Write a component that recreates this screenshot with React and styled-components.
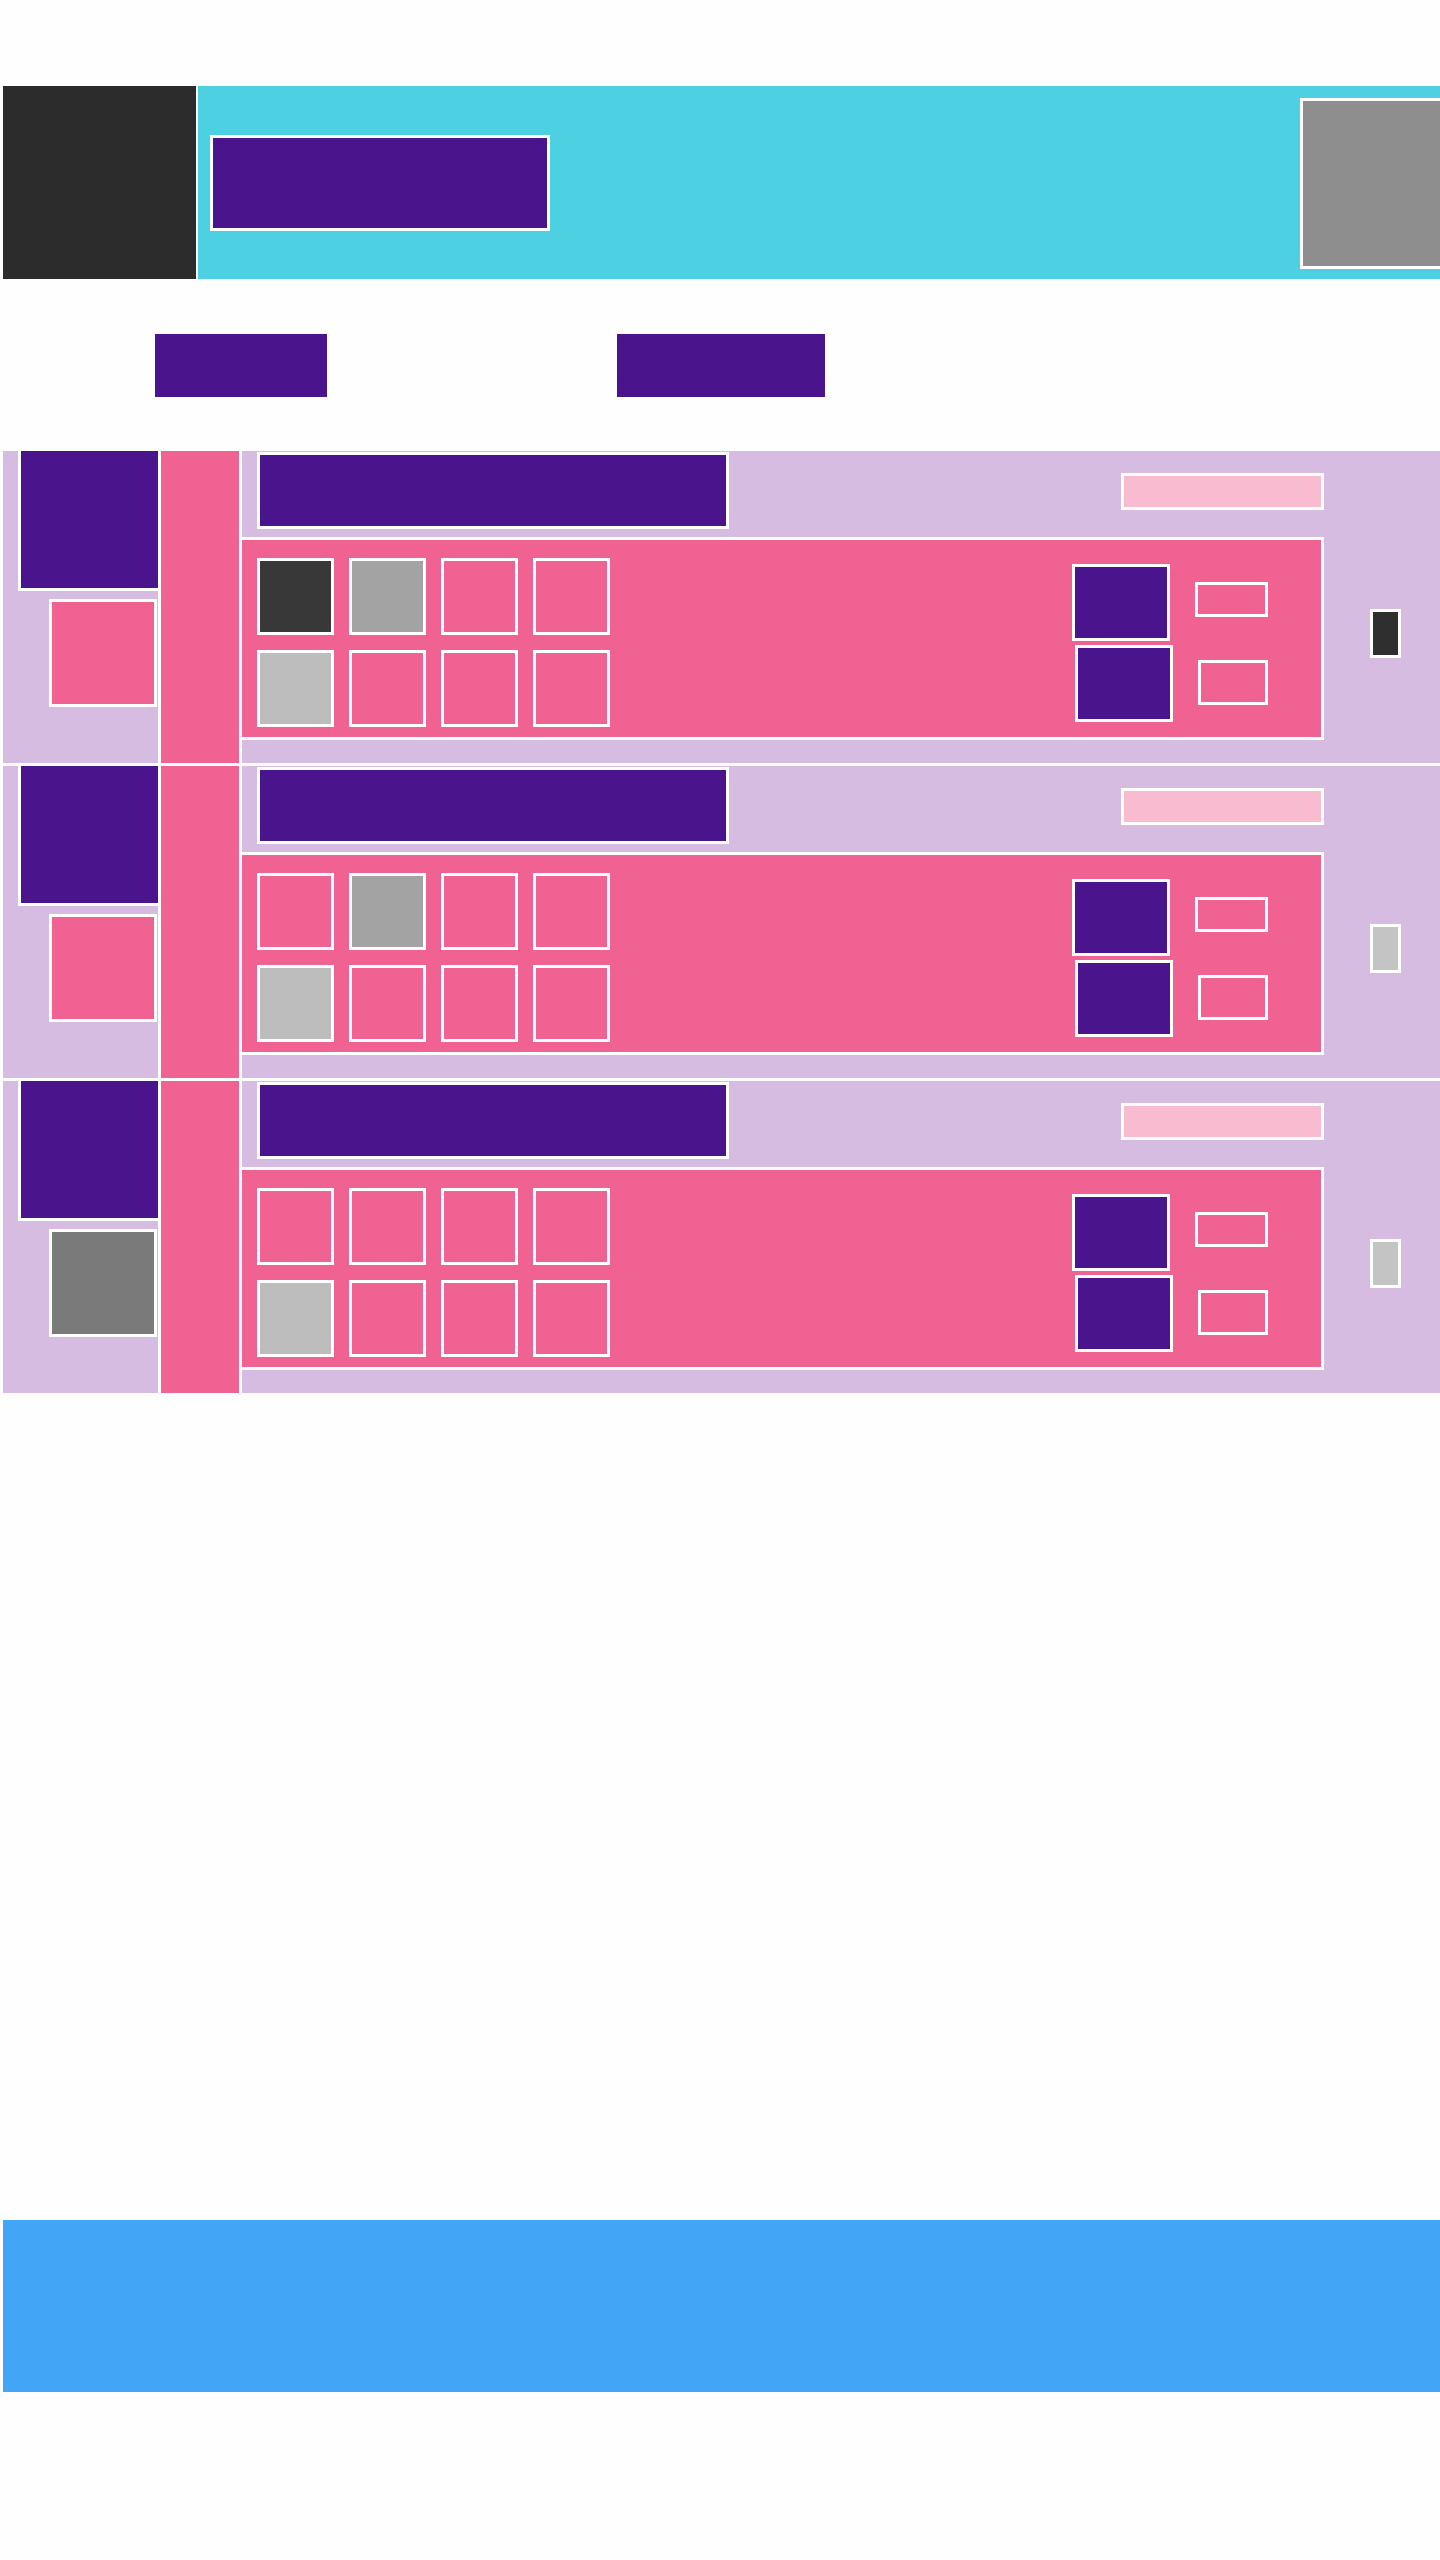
import React from 'react';
import styled, { createGlobalStyle } from 'styled-components';

const GlobalStyle = createGlobalStyle`
  html, body {
    margin: 0;
    padding: 0;
    background: #fefefe;
    font-family: "Liberation Sans", Arial, sans-serif;
  }
  * {
    box-sizing: border-box;
  }
`;

const Page = styled.div`
  width: 1440px;
  min-height: 2560px;
  padding: 86px 0 0 3px;
  overflow: hidden;
`;

const Header = styled.header`
  display: flex;
  gap: 2px;
  height: 193px;
`;

const Brand = styled.div`
  width: 193px;
  flex-shrink: 0;
  background: #2c2c2c;
`;

const HeaderBar = styled.div`
  flex: 1;
  display: flex;
  justify-content: space-between;
  align-items: center;
  padding-left: 12px;
  background: #4dd0e1;
  overflow: hidden;
`;

const Title = styled.div`
  width: 340px;
  height: 96px;
  background: #4a148c;
  border: 3px solid #fff;
`;

const Avatar = styled.div`
  align-self: flex-start;
  width: 150px;
  height: 171px;
  margin-top: 12px;
  margin-right: -10px;
  background: #8e8e8e;
  border: 3px solid #fff;
`;

const Nav = styled.nav`
  display: flex;
  height: 63px;
  margin: 55px 0 54px;
  padding-left: 152px;
  gap: 290px;
`;

const NavItem = styled.div`
  width: ${p => p.w}px;
  background: #4a148c;
`;

const List = styled.div`
  display: flex;
  flex-direction: column;
  gap: 3px;
`;

const Row = styled.div`
  display: flex;
  gap: 3px;
  height: 312px;
`;

const Side = styled.div`
  width: 155px;
  flex-shrink: 0;
  display: flex;
  flex-direction: column;
  align-items: flex-end;
  background: #d7bce1;
`;

const Cover = styled.div`
  width: 140px;
  height: 140px;
  background: #4a148c;
  border-left: 3px solid #fff;
  border-bottom: 3px solid #fff;
`;

const Thumb = styled.div`
  width: 108px;
  height: 108px;
  margin: 8px 1px 0 0;
  background: ${p => p.color};
  border: 3px solid #fff;
`;

const Rail = styled.div`
  width: 78px;
  flex-shrink: 0;
  background: #f06292;
`;

const Content = styled.div`
  flex: 1;
  display: grid;
  grid-template-columns: 1082px 1fr;
  background: #d7bce1;
`;

const Main = styled.div`
  display: flex;
  flex-direction: column;
`;

const TopBar = styled.div`
  display: flex;
  justify-content: space-between;
  align-items: flex-start;
  height: 86px;
  padding: 1px 0 0 15px;
`;

const Heading = styled.div`
  width: 472px;
  height: 77px;
  background: #4a148c;
  border: 3px solid #fff;
`;

const Tag = styled.div`
  width: 203px;
  height: 37px;
  margin-top: 21px;
  background: #f8bbd0;
  border: 3px solid #fff;
`;

const Panel = styled.div`
  display: flex;
  justify-content: space-between;
  align-items: flex-start;
  height: 203px;
  padding: 18px 53px 0 15px;
  background: #f06292;
  border: 3px solid #fff;
  border-left: none;
`;

const Grid = styled.div`
  display: grid;
  grid-template-columns: repeat(4, 77px);
  grid-auto-rows: 77px;
  gap: 15px;
`;

const Cell = styled.div`
  background: ${p => p.color};
  border: 3px solid #fff;
`;

const Actions = styled.div`
  display: flex;
  flex-direction: column;
  gap: 4px;
  margin-top: 6px;
`;

const ActionRow = styled.div`
  display: flex;
  justify-content: flex-end;
  align-items: center;
  gap: 25px;
`;

const Button = styled.div`
  width: 98px;
  height: 77px;
  background: #4a148c;
  border: 3px solid #fff;
`;

const Chip = styled.div`
  width: ${p => p.w}px;
  height: ${p => p.h}px;
  margin-top: ${p => p.offset || 0}px;
  background: #f06292;
  border: 3px solid #fff;
`;

const Aside = styled.div`
  padding: 158px 0 0 46px;
`;

const Toggle = styled.div`
  width: 31px;
  height: 49px;
  background: ${p => p.color};
  border: 3px solid #fff;
`;

const Footer = styled.footer`
  height: 172px;
  margin-top: 827px;
  background: #42a5f5;
`;

const PINK = '#f06292';

const rows = [
  {
    thumb: PINK,
    cells: ['#383838', '#a3a3a3', PINK, PINK, '#bdbdbd', PINK, PINK, PINK],
    toggle: '#2f2f2f',
  },
  {
    thumb: PINK,
    cells: [PINK, '#a3a3a3', PINK, PINK, '#bdbdbd', PINK, PINK, PINK],
    toggle: '#c4c4c4',
  },
  {
    thumb: '#7a7a7a',
    cells: [PINK, PINK, PINK, PINK, '#bdbdbd', PINK, PINK, PINK],
    toggle: '#c4c4c4',
  },
];

const ListRow = ({ row }) => (
  <Row>
    <Side>
      <Cover />
      <Thumb color={row.thumb} />
    </Side>
    <Rail />
    <Content>
      <Main>
        <TopBar>
          <Heading />
          <Tag />
        </TopBar>
        <Panel>
          <Grid>
            {row.cells.map((c, i) => (
              <Cell key={i} color={c} />
            ))}
          </Grid>
          <Actions>
            <ActionRow>
              <Button />
              <Chip w={73} h={35} offset={-6} />
            </ActionRow>
            <ActionRow>
              <Button />
              <Chip w={70} h={45} offset={-2} />
            </ActionRow>
          </Actions>
        </Panel>
      </Main>
      <Aside>
        <Toggle color={row.toggle} />
      </Aside>
    </Content>
  </Row>
);

export default function App() {
  return (
    <>
      <GlobalStyle />
      <Page>
        <Header>
          <Brand />
          <HeaderBar>
            <Title />
            <Avatar />
          </HeaderBar>
        </Header>
        <Nav>
          <NavItem w={172} />
          <NavItem w={208} />
        </Nav>
        <List>
          {rows.map((row, i) => (
            <ListRow key={i} row={row} />
          ))}
        </List>
        <Footer />
      </Page>
    </>
  );
}
